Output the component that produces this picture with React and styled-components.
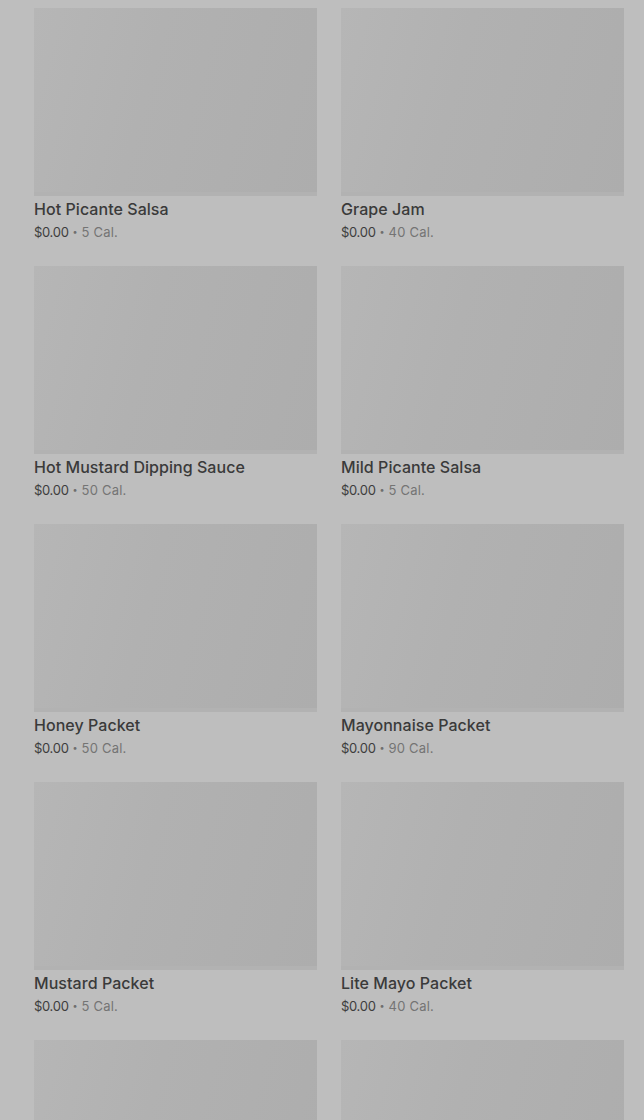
import styled, { createGlobalStyle } from "styled-components";

const items = [
  { name: "Hot Picante Salsa", cal: 5 },
  { name: "Grape Jam", cal: 40 },
  { name: "Hot Mustard Dipping Sauce", cal: 50 },
  { name: "Mild Picante Salsa", cal: 5 },
  { name: "Honey Packet", cal: 50 },
  { name: "Mayonnaise Packet", cal: 90 },
  { name: "Mustard Packet", cal: 5 },
  { name: "Lite Mayo Packet", cal: 40 },
  { name: null },
  { name: null },
];

export default function App() {
  return (
    <>
      <GlobalStyle />
      <Grid>
        {items.map((item, i) => (
          <Card key={i}>
            <Thumb />
            {item.name && (
              <>
                <Title>{item.name}</Title>
                <Meta>
                  <Price>$0.00</Price>
                  <Dot>•</Dot>
                  <Cal>{item.cal} Cal.</Cal>
                </Meta>
              </>
            )}
          </Card>
        ))}
      </Grid>
    </>
  );
}

const GlobalStyle = createGlobalStyle`
  html, body {
    margin: 0;
    background: #bebebe;
  }
  body {
    font-family: Inter, "Noto Sans", sans-serif;
  }
`;

const Grid = styled.div`
  display: grid;
  grid-template-columns: 283px 283px;
  column-gap: 24px;
  row-gap: 25px;
  padding: 8px 20px 0 34px;
  height: 1120px;
  box-sizing: border-box;
  overflow: hidden;
`;

const Card = styled.div`
  display: flex;
  flex-direction: column;
`;

const Thumb = styled.div`
  height: 188px;
  flex-shrink: 0;
  background: linear-gradient(105deg, #b6b6b6 0%, #b1b1b1 40%, #adadad 100%);
  box-shadow: inset 0 -4px 0 #b2b2b2;
`;

const Title = styled.div`
  margin-top: 3px;
  font-size: 16px;
  line-height: 20px;
  font-weight: 500;
  color: #3a3a3a;
  letter-spacing: 0.05px;
`;

const Meta = styled.div`
  margin-top: 4px;
  font-size: 13px;
  line-height: 18px;
  display: flex;
  align-items: center;
  gap: 4px;
`;

const Price = styled.span`
  color: #3d3d3d;
  letter-spacing: -0.3px;
`;

const Dot = styled.span`
  color: #6e6e6e;
  font-size: 9px;
`;

const Cal = styled.span`
  color: #747474;
  letter-spacing: 0.2px;
`;
